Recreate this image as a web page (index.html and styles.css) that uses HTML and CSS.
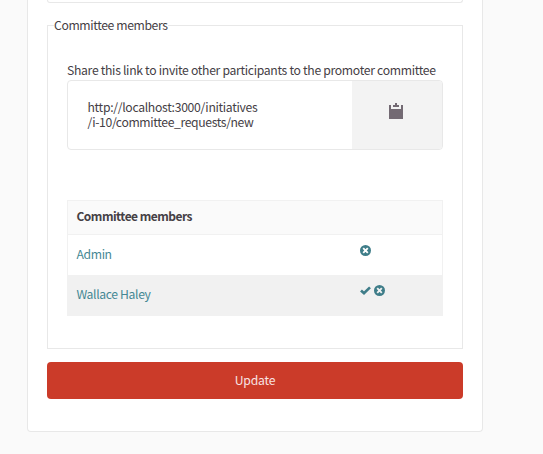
FILE: index.html
```html
<!DOCTYPE html>
<html lang="en">
<head>
<meta charset="utf-8">
<title>Committee members</title>
<link rel="stylesheet" href="styles.css">
</head>
<body>
<main class="card">
  <div class="field"></div>
  <fieldset class="committee">
    <legend>Committee members</legend>
    <p class="hint">Share this link to invite other participants to the promoter committee</p>
    <div class="share">
      <div class="share-url"><div>http://localhost:3000/initiatives</div><div class="path">/i-10/committee_requests/new</div></div>
      <button class="copy" type="button" aria-label="Copy">
        <svg width="14" height="16" viewBox="0 0 14 16"><path fill="#736a73" d="M0 2h2v4h10V2h2v14H0zM4 2h2V0h2v2h2v2H4z"/></svg>
      </button>
    </div>
    <div class="members">
      <div class="row head">Committee members</div>
      <div class="row"><a>Admin</a><span class="actions">
        <svg width="11" height="11" viewBox="0 0 11 11"><circle cx="5.5" cy="5.5" r="5.5" fill="#3f7d89"/><path d="M3.2 3.2l4.6 4.6M7.8 3.2L3.2 7.8" stroke="#fff" stroke-width="1.9"/></svg></span></div>
      <div class="row alt"><a>Wallace Haley</a><span class="actions">
        <svg width="11" height="11" viewBox="0 0 11 11"><path d="M1 5.4L4 8.2L10 2.4" fill="none" stroke="#3f7d89" stroke-width="2.7"/></svg>
        <svg width="11" height="11" viewBox="0 0 11 11"><circle cx="5.5" cy="5.5" r="5.5" fill="#3f7d89"/><path d="M3.2 3.2l4.6 4.6M7.8 3.2L3.2 7.8" stroke="#f1f1f1" stroke-width="1.9"/></svg></span></div>
    </div>
  </fieldset>
  <button class="update" type="button">Update</button>
</main>
</body>
</html>
```
FILE: styles.css
```css
* { box-sizing: border-box; }
body { margin: 0; height: 454px; overflow: hidden; background: #fafafa; color: #454045; font: 12.2px/15px "Noto Sans CJK SC", sans-serif; letter-spacing: -.31px; }
.card { width: 456px; height: 432px; margin-left: 27px; padding: 0 19px; background: #fff; border: 1px solid #e8e8e8; border-top: 0; border-radius: 0 0 4px 4px; }
.field { height: 3px; border: 1px solid #e8e8e8; border-top: 0; border-radius: 0 0 4px 4px; }
.committee { min-width: 0; height: 331px; margin: 15px 0 13px; padding: 30px 19px 0; border: 1px solid #e8e8e8; }
legend { height: 15px; margin-left: -13px; padding: 0; letter-spacing: -.38px; }
.hint { margin: 0 0 2px; white-space: nowrap; }
.share { display: flex; width: 376px; height: 70px; border: 1px solid #e8e8e8; border-radius: 4px; overflow: hidden; }
.share-url { flex: 1; padding: 19px 20px 19px 19.5px; }
.path { letter-spacing: -.37px; }
.copy { width: 90px; border: 0; padding: 0 2px 6px 0; background: #f3f3f3; }
.members { width: 376px; margin-top: 50px; border: 1px solid #f1f1f1; }
.row { display: flex; height: 40px; align-items: center; padding: 0 0 2px 9px; color: #458894; }
.row a { width: 283px; margin-left: -.5px; margin-right: .5px; letter-spacing: -.37px; }
.head { height: 34px; padding: 0 0 5px 8.5px; background: #fafafa; border-bottom: 1px solid #f1f1f1; color: #454045; font-size: 12px; font-weight: 700; letter-spacing: -.52px; }
.alt { background: #f1f1f1; }
.actions { display: flex; gap: 3px; margin-top: -8px; }
.update { display: block; width: 416px; height: 37px; padding: 0; border: 0; border-radius: 4px; background: #cb3b29; color: #f7e3e3; font: inherit; letter-spacing: -.2px; }
```
